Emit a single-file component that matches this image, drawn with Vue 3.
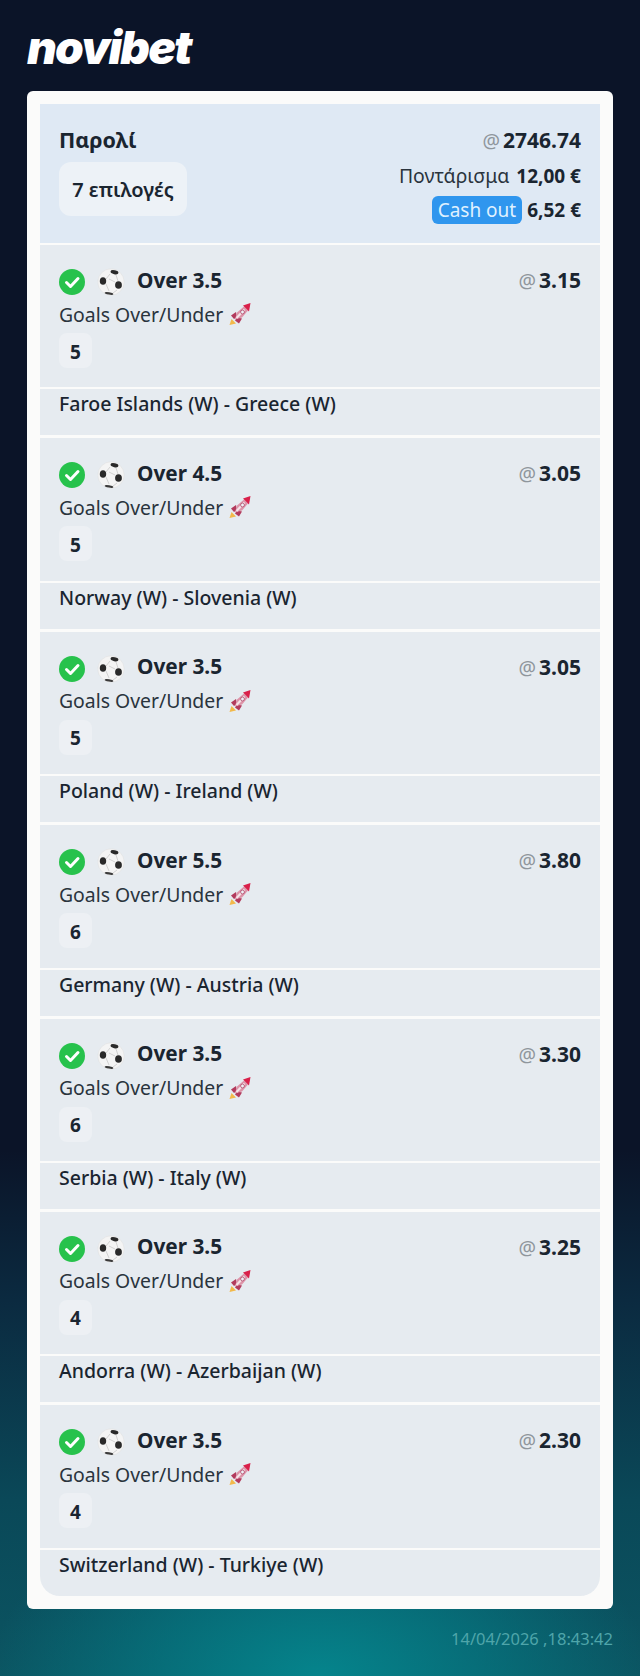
<template>
  <div class="page">
    <div class="logo">novibet</div>

    <div class="card">
      <div class="inner">
        <div class="head">
          <div class="head-left">
            <div class="parlay">Παρολί</div>
            <div class="count">7 επιλογές</div>
          </div>
          <div class="head-right">
            <div class="odds-line"><span class="at">@</span><b class="big">2746.74</b></div>
            <div class="stake-line">Ποντάρισμα <b>12,00 €</b></div>
            <div class="cash-line"><span class="cash">Cash out</span><b>6,52 €</b></div>
          </div>
        </div>

        <div v-for="(s, i) in selections" :key="i" class="sel">
          <div class="sel-main">
            <div class="sel-top">
              <svg class="check" viewBox="0 0 26 26" width="26" height="26">
                <circle cx="13" cy="13" r="13" fill="#27c24c" />
                <path d="M7.5 13.5l4 4 7.5-8" fill="none" stroke="#fff" stroke-width="3" stroke-linecap="round" stroke-linejoin="round" />
              </svg>
              <svg class="ball" viewBox="0 0 28 28" width="28" height="28">
                <circle cx="14" cy="14" r="13.2" fill="#f4f4f4" stroke="#dcdcdc" stroke-width=".5" />
                <ellipse cx="17.5" cy="4.2" rx="4" ry="2" fill="#2a2a2a" transform="rotate(12 17.5 4.2)" />
                <ellipse cx="6" cy="13" rx="3.2" ry="3.8" fill="#2a2a2a" />
                <ellipse cx="21.5" cy="17" rx="3.4" ry="3.8" fill="#2a2a2a" />
                <ellipse cx="12" cy="25.4" rx="4.4" ry="1.2" fill="#3a3a3a" transform="rotate(10 12 25.4)" />
                <path d="M9 11l4-5M9 16l3 7M18 14l-6-3M20 22l-4 3M19 7l2 6" stroke="#c9c9c9" stroke-width=".8" fill="none" />
              </svg>
              <span class="sel-name">{{ s.name }}</span>
              <span class="sel-odds"><span class="at">@</span><b>{{ s.odds }}</b></span>
            </div>
            <div class="market">
              Goals Over/Under
              <svg class="rocket" viewBox="0 0 24 24" width="24" height="24">
                <path d="M1.5 23l2-6 4.5 4.5z" fill="#f3b94a" />
                <path d="M3 13.5l5-3.5 1 5-3 2zM11 21.5l3-5-5-1-2 3z" fill="#b23a5c" />
                <path d="M7 17.5L9 10.5 16 4.5l4 4-6 7z" fill="#dd94a9" />
                <path d="M15 3.5L22.5 1 21 9.5z" fill="#d9204a" />
                <path d="M8.5 16l8-8.5" stroke="#f5e3e8" stroke-width="2" />
                <circle cx="14.5" cy="10" r="1.9" fill="#eef2f7" stroke="#a83a5a" stroke-width=".7" />
              </svg>
            </div>
            <div class="goals">{{ s.goals }}</div>
          </div>
          <div class="sel-event">{{ s.event }}</div>
        </div>
      </div>
    </div>

    <div class="stamp">14/04/2026 ,18:43:42</div>
  </div>
</template>

<script setup>
const selections = [
  { name: 'Over 3.5', odds: '3.15', goals: 5, event: 'Faroe Islands (W) - Greece (W)' },
  { name: 'Over 4.5', odds: '3.05', goals: 5, event: 'Norway (W) - Slovenia (W)' },
  { name: 'Over 3.5', odds: '3.05', goals: 5, event: 'Poland (W) - Ireland (W)' },
  { name: 'Over 5.5', odds: '3.80', goals: 6, event: 'Germany (W) - Austria (W)' },
  { name: 'Over 3.5', odds: '3.30', goals: 6, event: 'Serbia (W) - Italy (W)' },
  { name: 'Over 3.5', odds: '3.25', goals: 4, event: 'Andorra (W) - Azerbaijan (W)' },
  { name: 'Over 3.5', odds: '2.30', goals: 4, event: 'Switzerland (W) - Turkiye (W)' }
]
</script>

<style>
html, body { margin: 0; background: #0a1428; }
</style>

<style scoped>
.page {
  width: 640px;
  height: 1676px;
  box-sizing: border-box;
  padding: 22px 27px 0;
  font-family: "Noto Sans", "Open Sans", sans-serif;
  color: #1a2530;
  background:
    radial-gradient(ellipse 330px 190px at 50% 100%, #05848c 0%, rgba(5, 122, 132, 0.65) 50%, rgba(11, 85, 98, 0) 100%),
    linear-gradient(to bottom, #0b1428 0, #0b1428 1150px, #0b2a40 1300px, #0a4858 1500px, #0b5562 1676px);
  overflow: hidden;
}

.logo {
  height: 69px;
  font-family: Inter, "Liberation Sans", sans-serif;
  font-size: 46px;
  font-weight: 900;
  font-style: italic;
  letter-spacing: -1.8px;
  line-height: 50px;
  color: #fff;
}

.card {
  width: 586px;
  height: 1518px;
  box-sizing: border-box;
  padding: 13px;
  background: #fbfbfa;
  border-radius: 6px;
}

.inner {
  border-radius: 0 0 20px 20px;
  overflow: hidden;
}

.head {
  display: flex;
  justify-content: space-between;
  height: 139px;
  box-sizing: border-box;
  padding: 23px 19px 0;
  background: #dfe9f4;
}

.parlay {
  font-size: 21.5px;
  font-weight: 700;
  line-height: 25px;
}

.count {
  margin-top: 10px;
  width: 128px;
  height: 54px;
  display: flex;
  align-items: center;
  justify-content: center;
  background: #edf2f7;
  border-radius: 12px;
  font-size: 20px;
  font-weight: 600;
}

.head-right {
  display: flex;
  flex-direction: column;
  align-items: flex-end;
  font-size: 19.4px;
}

.odds-line { line-height: 27px; }
.big { font-size: 21px; }

.at {
  color: #8f969c;
  font-size: 19.5px;
  margin-right: 3px;
}

.stake-line {
  margin-top: 8px;
  line-height: 28px;
  color: #2a343d;
}

.stake-line b {
  margin-left: 2px;
  font-size: 19px;
  color: #1a2530;
}

.cash-line {
  margin-top: 6px;
  display: flex;
  align-items: center;
  gap: 5px;
  font-size: 19px;
}

.cash {
  background: #2f96ee;
  color: #dff1ff;
  font-size: 19px;
  line-height: 28px;
  padding: 0 6px;
  border-radius: 6px;
}

.sel {
  margin-top: 2px;
}

.sel + .sel {
  margin-top: 3px;
}

.sel-main {
  height: 142.4px;
  box-sizing: border-box;
  padding: 23px 19px 0;
  background: #e6ebf0;
}

.sel-top {
  display: flex;
  align-items: center;
  height: 28px;
}

.ball {
  margin-left: 12px;
  filter: blur(0.5px);
}

.sel-name {
  margin-left: 12px;
  padding-bottom: 5px;
  font-size: 20.8px;
  font-weight: 700;
}

.sel-odds {
  margin-left: auto;
  padding-bottom: 4px;
  font-size: 21px;
}

.market {
  margin-top: 3px;
  display: flex;
  align-items: center;
  gap: 5px;
  height: 30px;
  font-size: 19.4px;
  color: #2a343d;
}

.rocket {
  filter: blur(0.4px);
}

.goals {
  margin-top: 4px;
  width: 33px;
  height: 35px;
  padding-top: 2px;
  box-sizing: border-box;
  display: flex;
  align-items: center;
  justify-content: center;
  background: #edf0f4;
  border-radius: 8px;
  font-size: 19px;
  font-weight: 700;
}

.sel-event {
  margin-top: 2px;
  height: 46px;
  box-sizing: border-box;
  padding: 1px 19px 0;
  background: #e6ebf0;
  font-size: 19.5px;
  font-weight: 500;
  line-height: 27px;
}

.stamp {
  margin-top: 18px;
  text-align: right;
  font-size: 16.5px;
  color: #4fa5aa;
}
</style>
